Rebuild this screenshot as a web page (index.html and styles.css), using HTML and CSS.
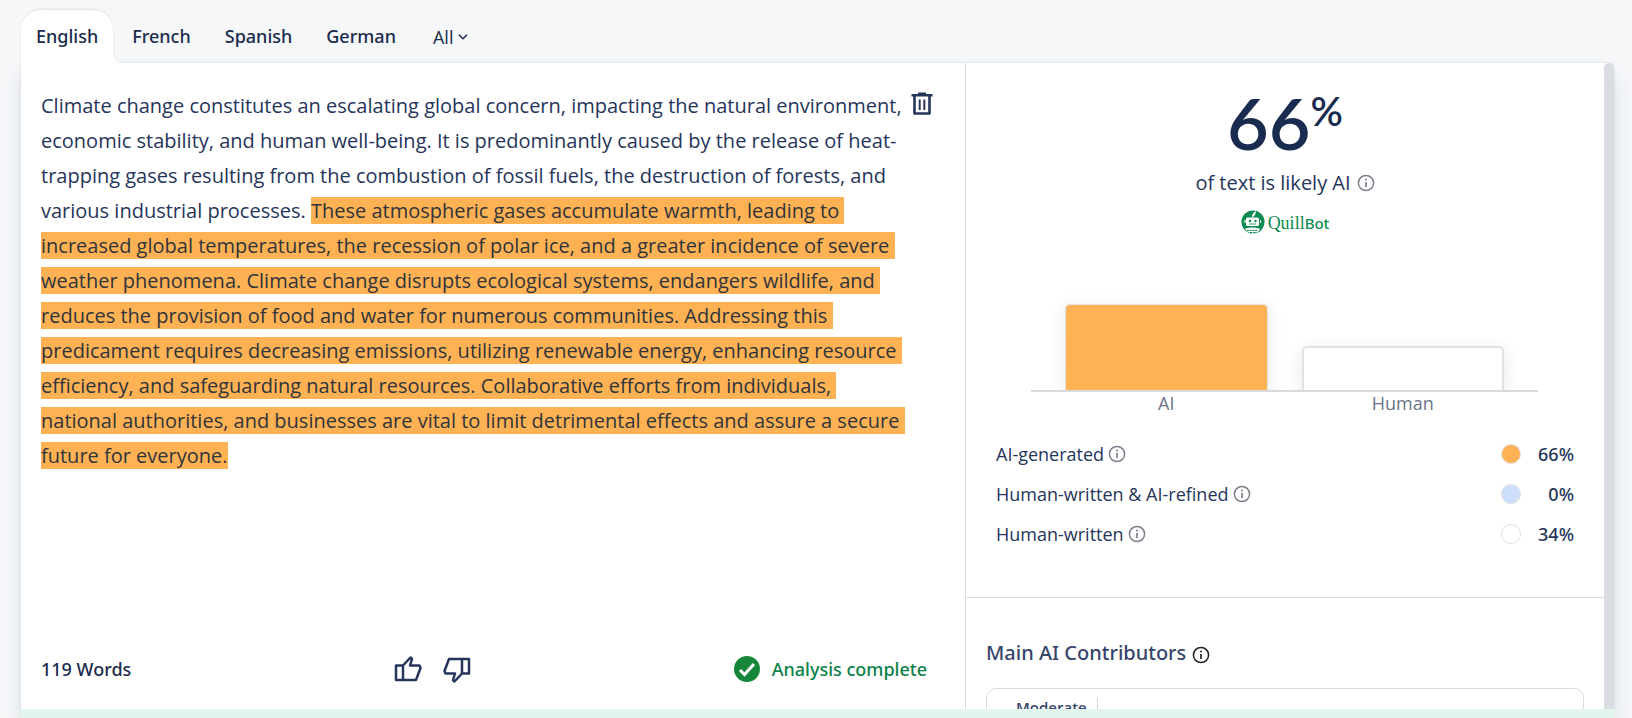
FILE: index.html
```html
<!DOCTYPE html>
<html lang="en">
<head>
<meta charset="utf-8">
<title>AI Detector</title>
<link rel="stylesheet" href="styles.css">
</head>
<body>
<svg class="defs" width="0" height="0" aria-hidden="true">
  <symbol id="info" viewBox="0 0 18 18">
    <circle cx="9" cy="9" r="7.6" fill="none" stroke="currentColor" stroke-width="1.5"/>
    <path d="M9 8v5" stroke="currentColor" stroke-width="1.7"/>
    <circle cx="9" cy="5.5" r="1" fill="currentColor"/>
  </symbol>
</svg>
<div class="app">
  <nav class="tabs" aria-label="Language">
    <button class="tab active">English<svg class="flare" viewBox="0 0 10 14" aria-hidden="true"><path d="M0 0C0 7 3 12 10 13.5H0z" fill="#fff"/><path d="M.5 0C.5 7 3 12 9 13.5" fill="none" stroke="#e3e6ea"/></svg></button>
    <button class="tab">French</button>
    <button class="tab">Spanish</button>
    <button class="tab">German</button>
    <button class="tab all">All<svg width="10" height="8" viewBox="0 0 10 8" aria-hidden="true"><path d="M1 1.8l4 4 4-4" fill="none" stroke="currentColor" stroke-width="1.5"/></svg></button>
  </nav>
  <div class="card">
    <main class="editor">
      <div class="body">
        <p class="text">Climate change constitutes an escalating global concern, impacting the natural environment, economic stability, and human well-being. It is predominantly caused by the release of heat-trapping gases resulting from the combustion of fossil fuels, the destruction of forests, and various industrial processes. <mark>These atmospheric gases accumulate warmth, leading to increased global temperatures, the recession of polar ice, and a greater incidence of severe weather phenomena. Climate change disrupts ecological systems, endangers wildlife, and reduces the provision of food and water for numerous communities. Addressing this predicament requires decreasing emissions, utilizing renewable energy, enhancing resource efficiency, and safeguarding natural resources. Collaborative efforts from individuals, national authorities, and businesses are vital to limit detrimental effects and assure a secure future for everyone.</mark></p>
        <button class="icon trash" aria-label="Delete text"><svg width="22" height="24" viewBox="0 0 22 24"><path d="M3.500 4v17.500h15V4" fill="none" stroke="currentColor" stroke-width="2.6" stroke-linejoin="round"/><path d="M.5 3.2h21M7 1.6h8" stroke="currentColor" stroke-width="2.4"/><path d="M8.7 7.500v10.500M13.300 7.500v10.500" stroke="currentColor" stroke-width="2"/></svg></button>
      </div>
      <footer class="footer">
        <span class="words">119 Words</span>
        <div class="votes">
          <button class="icon" aria-label="Good result"><svg width="28" height="28" viewBox="0 0 28 28" fill="none" stroke="currentColor" stroke-width="2.5" stroke-linejoin="round"><path d="M2 10.500h7V25H2zM9 10.500l7.500-8 1.500 1.500-2 6.500h9.500l1 2.500-4.500 12H9"/></svg></button>
          <button class="icon" aria-label="Poor result"><svg width="28" height="28" viewBox="0 0 28 28" fill="none" stroke="currentColor" stroke-width="2.5" stroke-linejoin="round"><path d="M26 18.500h-7V4h7zM19 18.500l-7.500 8-1.500-1.500 2-6.500H2.500l-1-2.500L6 4h13"/></svg></button>
        </div>
        <span class="status"><svg width="26" height="26" viewBox="0 0 26 26" aria-hidden="true"><circle cx="13" cy="13" r="13" fill="#16873a"/><path d="M6 14l4.500 4.500L20 8" fill="none" stroke="#fff" stroke-width="3"/></svg>Analysis complete</span>
      </footer>
    </main>
    <aside class="results">
      <section class="summary">
        <div class="score">66<sup>%</sup></div>
        <p class="likely">of text is likely AI <svg class="info"><use href="#info"/></svg></p>
        <div class="brand"><svg width="24" height="24" viewBox="0 0 24 24" aria-hidden="true"><circle cx="12" cy="12" r="11.500" fill="#0a8a50"/><path d="M11 7c0-2.500 1-4.500 4-6-.2 2.500-1 4.500-3 6z" fill="#fff"/><rect x="5" y="7.500" width="13" height="8.500" rx="1.500" fill="#fff"/><path d="M4 10v3M19.500 10v3" stroke="#fff" stroke-width="1.200"/><circle cx="9" cy="11" r="1.200" fill="#0a8a50"/><circle cx="14.500" cy="11" r="1.200" fill="#0a8a50"/><path d="M8 14h7" stroke="#0a8a50" stroke-width=".8"/><path d="M4 19c2-2 13-2 15 0l-1.500 2.500L12 24l-6-2.500z" fill="#fff"/><path d="M6 20.500h11M9 22.500h6" stroke="#0a8a50" stroke-width="1" stroke-dasharray="2 .7"/></svg><span class="wordmark"><span class="quill">Quill</span><span class="bot">Bot</span></span></div>
        <div class="chart">
          <div class="bars"><div class="bar ai"></div><div class="bar human"></div></div>
          <div class="labels"><span>AI</span><span>Human</span></div>
        </div>
        <ul class="legend">
          <li><span>AI-generated</span><svg class="info"><use href="#info"/></svg><i class="dot orange"></i><b>66%</b></li>
          <li><span>Human-written &amp; AI-refined</span><svg class="info"><use href="#info"/></svg><i class="dot blue"></i><b>0%</b></li>
          <li><span>Human-written</span><svg class="info"><use href="#info"/></svg><i class="dot"></i><b>34%</b></li>
        </ul>
      </section>
      <section class="contributors">
        <h2>Main AI Contributors <svg class="info dark"><use href="#info"/></svg></h2>
        <div class="panel"><span>Moderate</span></div>
      </section>
    </aside>
    <div class="scrollbar"></div>
  </div>
  <div class="banner"></div>
</div>
</body>
</html>
```
FILE: styles.css
```css
* { box-sizing: border-box; }
body {
  margin: 0;
  background: #f5f7f9;
  color: #26355a;
  font-family: "Open Sans", sans-serif;
  font-size: 18px;
}
button { border: 0; padding: 0; background: none; color: inherit; font: inherit; }
svg { display: block; }
.defs { position: absolute; }
.app {
  display: flex;
  flex-direction: column;
  height: 100vh;
  padding: 10px 18px 0 21px;
  overflow: hidden;
}

.tabs { display: flex; height: 53px; flex: none; }
.tab { padding: 0 17px 2px; color: #1b2b4d; font-family: "Noto Sans", sans-serif; font-weight: 500; }
.tab.active {
  position: relative;
  z-index: 1;
  margin-right: 2px;
  padding: 0 15px 2px;
  background: #fff;
  border-radius: 20px 20px 0 0;
  box-shadow: 0 -1px 2px #dfe2e6;
}
.flare { position: absolute; left: 100%; bottom: 0; width: 10px; height: 14px; }
.tab.all { display: flex; align-items: center; gap: 5px; padding: 0 20px; font-family: inherit; font-weight: 400; }

.card {
  display: grid;
  grid-template-columns: 944fr 639fr 10px;
  flex: 1;
  min-height: 0;
  background: #fff;
  border-radius: 0 8px 0 0;
  box-shadow: 0 0 3px #d5d9df, 0 14px 18px #d9dde3;
}
.editor { display: flex; flex-direction: column; min-width: 0; padding: 25px 32px 0 20px; }
.body { display: flex; flex: 1; justify-content: space-between; align-items: flex-start; }
.text { flex: 1; margin: 0; font-size: 20px; line-height: 35px; white-space: pre-wrap; }
mark { background: #ffb253; color: #30343c; }
.icon { color: #26355a; }
.trash { margin: 4px 0 0 6px; }
.footer {
  display: flex;
  align-items: center;
  justify-content: space-between;
  height: 80px;
  padding-right: 6px;
  font-family: "Noto Sans", sans-serif;
  font-weight: 500;
}
.words { color: #1b2b4d; }
.votes { display: flex; gap: 21px; }
.status { display: flex; align-items: center; gap: 12px; color: #0b8149; }

.results { min-width: 0; overflow: hidden; border-left: 1px solid #dadde0; }
.summary { padding: 22px 30px 0; height: 535px; border-bottom: 1px solid #dadde0; }
.score {
  display: flex;
  justify-content: center;
  height: 80px;
  color: #1a2b50;
  font-family: Lato, sans-serif;
  font-size: 72px;
  font-weight: 600;
  line-height: 74px;
}
.score sup { font-size: 40px; line-height: 52px; }
.likely { display: flex; align-items: center; justify-content: center; gap: 6px; margin: 3px 0 0; font-size: 20px; line-height: 30px; }
.info { width: 18px; height: 18px; color: #7c808a; }
.brand { display: flex; align-items: center; justify-content: center; gap: 3px; margin-top: 12px; height: 24px; color: #0a8a50; line-height: 24px; }
.quill { font-family: "Liberation Serif", serif; font-size: 18px; }
.bot { font-family: "Noto Sans", sans-serif; font-size: 15px; font-weight: 500; }
.chart { margin: 70px 36px 0 35px; }
.bars {
  display: grid;
  grid-template-columns: 1fr 1fr;
  gap: 34px;
  align-items: end;
  height: 88px;
  padding: 0 34px;
  border-bottom: 2px solid #d8dadd;
}
.bar { border: 2px solid #e0e2e5; border-bottom: 0; border-radius: 5px 5px 0 0; background: #fff; box-shadow: 0 4px 18px #e6e7ea; clip-path: inset(-20px -30px 0); }
.bar.ai { height: 86px; background: #ffb253; border-width: 1px; }
.bar.human { height: 44px; }
.labels { display: grid; grid-template-columns: 1fr 1fr; gap: 34px; padding: 0 34px; color: #6c7489; line-height: 22px; text-align: center; }
.legend { margin: 20px 0 0; padding: 0; list-style: none; }
.legend li { display: flex; align-items: center; gap: 4px; height: 40px; }
.dot { width: 20px; height: 20px; margin-left: auto; border: 1px solid #dee0e4; border-radius: 50%; }
.dot.orange { background: #ffb253; }
.dot.blue { background: #cddffb; }
.legend b { width: 49px; font-family: "Noto Sans", sans-serif; font-weight: 500; text-align: right; }
.contributors { padding: 40px 20px 0; }
.contributors h2 { display: flex; align-items: center; gap: 6px; margin: 0; color: #36456a; font-family: "Noto Sans", sans-serif; font-size: 20px; font-weight: 500; line-height: 30px; }
.info.dark { margin-top: 4px; color: #222; }
.panel { margin-top: 20px; height: 100px; padding: 9px 29px; border: 1px solid #dadde0; border-radius: 10px; }
.panel span { display: block; width: fit-content; padding-right: 10px; border-right: 1px solid #d1d5db; color: #36456a; font-size: 15px; font-weight: 600; line-height: 18px; }
.scrollbar { background: #d9dce0; border-radius: 5px 5px 0 0; }
.banner { position: relative; height: 9px; flex: none; background: #e3f6ed; }
```
